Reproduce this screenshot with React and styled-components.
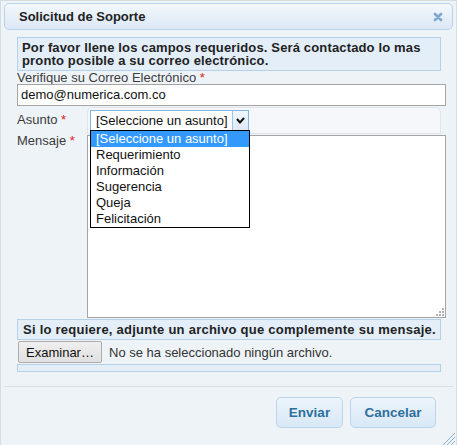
import styled, { createGlobalStyle } from "styled-components";

const GlobalStyle = createGlobalStyle`
  body {
    margin: 0;
    font-family: "Liberation Sans", Arial, sans-serif;
    background: #ffffff;
  }
`;

const Dialog = styled.div`
  position: relative;
  width: 457px;
  height: 445px;
  box-sizing: border-box;
  border: 1px solid #d6dce2;
  border-bottom: none;
  padding: 2px 3px 0 3px;
  background: #eef3f8;
  display: flex;
  flex-direction: column;
  color: #222;
  font-size: 13px;
`;

const TitleBar = styled.div`
  height: 27px;
  box-sizing: border-box;
  border: 1px solid #b9d3ea;
  border-radius: 5px;
  background: linear-gradient(#f3f8fc, #dbe8f5);
  display: flex;
  align-items: center;
  justify-content: space-between;
  padding: 0 9px 0 14px;
`;

const Title = styled.span`
  font-weight: bold;
  font-size: 13px;
  color: #222;
`;

const Content = styled.div`
  padding: 7px 7px 0 13px;
  display: flex;
  flex-direction: column;
`;

const Highlight = styled.div`
  box-sizing: border-box;
  width: 424px;
  border: 1px solid #b5d1ea;
  background: #e3eef9;
  font-weight: bold;
  font-size: 13px;
  letter-spacing: ${(p) => p.$ls || "0.15px"};
  line-height: ${(p) => p.$lh || "13px"};
  padding: ${(p) => p.$pad || "3px 4px"};
  margin-top: ${(p) => p.$mt || "0"};
  height: ${(p) => p.$h || "auto"};
  color: #222;
  white-space: nowrap;
`;

const Label = styled.div`
  line-height: 13px;
  color: #3c3c3c;
  padding-top: ${(p) => p.$top || "0"};
  margin-top: ${(p) => p.$mt || "0"};
`;

const Req = styled.span`
  color: #e0201a;
`;

const TextInput = styled.div`
  box-sizing: border-box;
  height: 22px;
  border: 1px solid #a5a5a5;
  background: #fff;
  padding: 0 3px;
  line-height: 20px;
  color: #111;
`;

const FieldRow = styled.div`
  display: grid;
  grid-template-columns: 70px 1fr;
  align-items: start;
  margin-top: 1px;
`;

const SelectPanel = styled.div`
  box-sizing: border-box;
  width: 354px;
  height: 27px;
  border: 1px solid #e1e5ea;
  border-radius: 5px 5px 0 0;
  background: #f5f7fa;
  padding: 2px 0 0 2px;
`;

const Select = styled.div`
  position: relative;
  box-sizing: border-box;
  width: 159px;
  height: 21px;
  border: 1px solid #80b5e8;
  background: #fff;
  display: flex;
  align-items: stretch;
`;

const SelectValue = styled.span`
  flex: 1;
  padding-left: 5px;
  line-height: 19px;
  color: #111;
`;

const ArrowBox = styled.span`
  width: 15px;
  border-left: 1px solid #9cc3ea;
  background: linear-gradient(#f0f6fc, #dde9f5);
  display: flex;
  align-items: center;
  justify-content: center;
`;

const Options = styled.ul`
  position: absolute;
  left: -1px;
  top: 19px;
  width: 160px;
  box-sizing: border-box;
  margin: 0;
  padding: 0;
  list-style: none;
  border: 1px solid #000;
  background: #fff;
  z-index: 2;
`;

const Option = styled.li`
  height: 16px;
  line-height: 16px;
  padding-left: 5px;
  color: ${(p) => (p.$active ? "#fff" : "#111")};
  background: ${(p) => (p.$active ? "#3399ff" : "transparent")};
`;

const MessageBox = styled.div`
  position: relative;
  box-sizing: border-box;
  height: 183px;
  border: 1px solid #a5a5a5;
  background: #fff;
`;

const Grip = styled.svg`
  position: absolute;
  right: 1px;
  bottom: 1px;
`;

const FileRow = styled.div`
  display: flex;
  align-items: center;
  height: 22px;
  margin-top: 1px;
  gap: 7px;
`;

const BrowseButton = styled.button`
  box-sizing: border-box;
  width: 84px;
  height: 22px;
  margin-left: 1px;
  border: 1px solid #acacac;
  border-radius: 2px;
  background: linear-gradient(#efefef, #e0e0e0);
  font-family: "Liberation Sans", Arial, sans-serif;
  font-size: 13px;
  color: #111;
  padding: 0;
`;

const FileStatus = styled.span`
  color: #333;
`;

const ButtonPane = styled.div`
  margin-top: 14px;
  border-top: 1px solid #dcdfe2;
  padding: 10px 17px 0 0;
  display: flex;
  justify-content: flex-end;
  gap: 7px;
`;

const ActionButton = styled.button`
  box-sizing: border-box;
  width: ${(p) => p.$w};
  height: 31px;
  border: 1px solid #bcd5ec;
  border-radius: 5px;
  background: linear-gradient(#ecf4fc, #d8e8f6);
  color: #2e6e9e;
  font-family: "Liberation Sans", Arial, sans-serif;
  font-weight: bold;
  font-size: 13.5px;
  padding: 0;
`;

const ResizeGrip = styled.svg`
  position: absolute;
  right: 1px;
  bottom: 0;
`;

const options = [
  "[Seleccione un asunto]",
  "Requerimiento",
  "Información",
  "Sugerencia",
  "Queja",
  "Felicitación",
];

function CloseIcon() {
  return (
    <svg width="10" height="10" viewBox="0 0 10 10">
      <path d="M2 2 L8 8 M8 2 L2 8" stroke="#7fa7cf" strokeWidth="2.8" strokeLinecap="round" />
    </svg>
  );
}

export default function App() {
  return (
    <>
      <GlobalStyle />
      <Dialog>
        <TitleBar>
          <Title>Solicitud de Soporte</Title>
          <CloseIcon />
        </TitleBar>
        <Content>
          <Highlight>
            Por favor llene los campos requeridos. Será contactado lo mas
            <br />
            pronto posible a su correo electrónico.
          </Highlight>
          <Label>
            Verifique su Correo Electrónico <Req>*</Req>
          </Label>
          <TextInput>demo@numerica.com.co</TextInput>
          <FieldRow>
            <Label $top="6px">
              Asunto <Req>*</Req>
            </Label>
            <SelectPanel>
              <Select>
                <SelectValue>[Seleccione un asunto]</SelectValue>
                <ArrowBox>
                  <svg width="9" height="7" viewBox="0 0 9 7">
                    <polyline points="1,2 4,5.5 8,1" fill="none" stroke="#111" strokeWidth="2" />
                  </svg>
                </ArrowBox>
                <Options>
                  {options.map((o, i) => (
                    <Option key={o} $active={i === 0}>
                      {o}
                    </Option>
                  ))}
                </Options>
              </Select>
            </SelectPanel>
          </FieldRow>
          <FieldRow>
            <Label $mt="-1px">
              Mensaje <Req>*</Req>
            </Label>
            <MessageBox>
              <Grip width="8" height="8" viewBox="0 0 8 8">
                <g fill="#b5b5b5">
                  <rect x="6" y="0" width="2" height="2" />
                  <rect x="3" y="3" width="2" height="2" />
                  <rect x="6" y="3" width="2" height="2" />
                  <rect x="0" y="6" width="2" height="2" />
                  <rect x="3" y="6" width="2" height="2" />
                  <rect x="6" y="6" width="2" height="2" />
                </g>
              </Grip>
            </MessageBox>
          </FieldRow>
          <Highlight $lh="19px" $pad="0 5px" $mt="1px" $ls="0.25px">
            Si lo requiere, adjunte un archivo que complemente su mensaje.
          </Highlight>
          <FileRow>
            <BrowseButton>Examinar…</BrowseButton>
            <FileStatus>No se ha seleccionado ningún archivo.</FileStatus>
          </FileRow>
          <Highlight $h="8px" $pad="0" $mt="1px" />
        </Content>
        <ButtonPane>
          <ActionButton $w="67px">Enviar</ActionButton>
          <ActionButton $w="86px">Cancelar</ActionButton>
        </ButtonPane>
        <ResizeGrip width="15" height="15" viewBox="0 0 15 15">
          <g stroke="#8fb0d0" strokeWidth="1">
            <line x1="3" y1="15" x2="15" y2="3" />
            <line x1="7" y1="15" x2="15" y2="7" />
            <line x1="11" y1="15" x2="15" y2="11" />
          </g>
        </ResizeGrip>
      </Dialog>
    </>
  );
}
